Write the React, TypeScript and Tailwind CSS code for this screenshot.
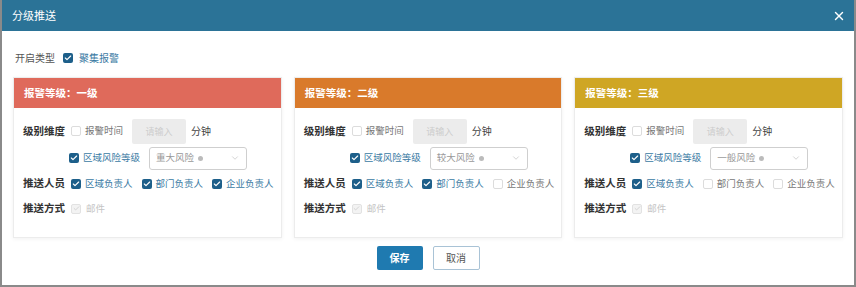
import { X, ChevronDown, Check } from "lucide-react";

type Opt = { label: string; checked: boolean };

const levels = [
  {
    title: "报警等级：一级",
    color: "bg-[#df6a5b]",
    risk: "重大风险",
    people: [
      { label: "区域负责人", checked: true },
      { label: "部门负责人", checked: true },
      { label: "企业负责人", checked: true },
    ],
  },
  {
    title: "报警等级：二级",
    color: "bg-[#d97a2b]",
    risk: "较大风险",
    people: [
      { label: "区域负责人", checked: true },
      { label: "部门负责人", checked: true },
      { label: "企业负责人", checked: false },
    ],
  },
  {
    title: "报警等级：三级",
    color: "bg-[#cfa624]",
    risk: "一般风险",
    people: [
      { label: "区域负责人", checked: true },
      { label: "部门负责人", checked: false },
      { label: "企业负责人", checked: false },
    ],
  },
];

function Box({ checked, disabled }: { checked: boolean; disabled?: boolean }) {
  if (disabled) {
    return (
      <span className="w-[10px] h-[10px] rounded-[2px] border border-[#e2e2e2] bg-[#f3f3f3] flex items-center justify-center shrink-0">
        <Check size={7} strokeWidth={3} className="text-[#cfcfcf]" />
      </span>
    );
  }
  if (checked) {
    return (
      <span className="w-[10px] h-[10px] rounded-[2px] bg-[#1d5f8a] flex items-center justify-center shrink-0">
        <Check size={8} strokeWidth={3.5} className="text-white" />
      </span>
    );
  }
  return <span className="w-[10px] h-[10px] rounded-[2px] border border-[#dcdcdc] bg-white shrink-0" />;
}

function CheckItem({ label, checked }: Opt) {
  return (
    <span className="flex items-center gap-[4px] whitespace-nowrap">
      <Box checked={checked} />
      <span className={checked ? "text-[#3a7aa3]" : "text-[#777]"}>{label}</span>
    </span>
  );
}

function Label({ children }: { children: string }) {
  return (
    <span className="w-[48px] shrink-0 whitespace-nowrap text-[#333] font-semibold text-[10.5px]">
      {children}
    </span>
  );
}

function LevelCard({ level }: { level: (typeof levels)[number] }) {
  return (
    <div className="border border-[#ececec] shadow-[0_1px_4px_rgba(0,0,0,0.06)] bg-white h-[161px]">
      <div className={`${level.color} h-[30px] flex items-center px-[10px] text-white font-bold text-[10.5px]`}>
        {level.title}
      </div>
      <div className="px-[9px] pt-[10px] flex flex-col text-[9.5px]">
        <div className="flex items-center h-[26px]">
          <Label>级别维度</Label>
          <CheckItem label="报警时间" checked={false} />
          <span className="ml-[9px] w-[54px] h-[25px] rounded-[2px] bg-[#ececec] text-[#ccc] text-[9px] flex items-center justify-center">
            请输入
          </span>
          <span className="ml-[5px] text-[#444] text-[10px]">分钟</span>
        </div>
        <div className="flex items-center h-[26px] pl-[46px] mt-[1px]">
          <CheckItem label="区域风险等级" checked={true} />
          <span className="ml-[9px] w-[98px] h-[23px] border border-[#cfcfcf] rounded-[3px] flex items-center justify-between px-[6px]">
            <span className="flex items-center gap-[4px] text-[#999] text-[9.5px]">
              {level.risk}
              <span className="w-[5px] h-[5px] rounded-full bg-[#bbb]" />
            </span>
            <ChevronDown size={10} className="text-[#ccc]" />
          </span>
        </div>
        <div className="flex items-center h-[25px]">
          <Label>推送人员</Label>
          <div className="flex items-center gap-[9px]">
            {level.people.map((p) => (
              <CheckItem key={p.label} label={p.label} checked={p.checked} />
            ))}
          </div>
        </div>
        <div className="flex items-center h-[25px]">
          <Label>推送方式</Label>
          <span className="flex items-center gap-[5px]">
            <Box checked={true} disabled />
            <span className="text-[#c4c4c4]">邮件</span>
          </span>
        </div>
      </div>
    </div>
  );
}

export default function App() {
  return (
    <div
      className="w-[856px] h-[287px] bg-white flex flex-col border-l-2 border-r-2 border-b-2 border-[#8a8a8a] text-[10px] leading-none overflow-hidden"
      style={{ fontFamily: '"Noto Sans CJK SC", "Noto Sans", sans-serif' }}
    >
      <div className="h-[31px] bg-[#2b7397] flex items-center justify-between pl-[10px] pr-[8px] text-white shrink-0">
        <span className="text-[11px]">分级推送</span>
        <X size={14} strokeWidth={2.5} />
      </div>
      <div className="flex items-center h-[18px] mt-[18px] pl-[13px]">
        <span className="text-[#555] mr-[8px]">开启类型</span>
        <span className="flex items-center gap-[6px]">
          <Box checked={true} />
          <span className="text-[#3a7aa3]">聚集报警</span>
        </span>
      </div>
      <div className="grid grid-cols-3 gap-[12px] px-[11px] mt-[10px]">
        {levels.map((l) => (
          <LevelCard key={l.title} level={l} />
        ))}
      </div>
      <div className="flex justify-center gap-[10px] mt-[8px]">
        <button className="w-[46px] h-[24px] rounded-[2px] bg-[#1f7ab0] text-white font-bold text-[10px]">
          保存
        </button>
        <button className="w-[47px] h-[24px] rounded-[2px] border border-[#a9c3d6] bg-white text-[#555] text-[10px]">
          取消
        </button>
      </div>
    </div>
  );
}
